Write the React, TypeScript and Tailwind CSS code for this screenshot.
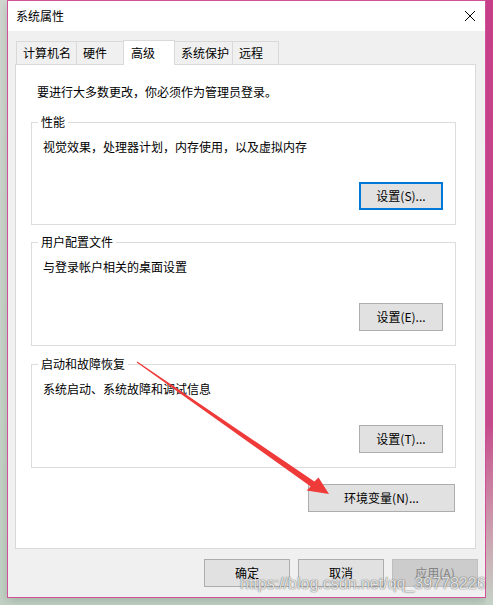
import React from 'react';

type BtnKind = 'normal' | 'focus' | 'disabled';

const kindClass: Record<BtnKind, string> = {
  normal: 'border border-[#adadad] bg-[#e1e1e1] text-black',
  focus: 'border-2 border-[#0078d7] bg-[#e1e1e1] text-black',
  disabled: 'border border-[#bfbfbf] bg-[#cccccc] text-[#838383]',
};

interface WinButtonProps {
  label: string;
  width: string;
  kind?: BtnKind;
}

const WinButton: React.FC<WinButtonProps> = ({ label, width, kind = 'normal' }) => (
  <div className={`flex h-[28px] items-center justify-center text-[12px] leading-none ${width} ${kindClass[kind]}`}>
    {label}
  </div>
);

interface GroupProps {
  title: string;
  desc: string;
  button: string;
  height: string;
  spacing: string;
  kind?: BtnKind;
}

const Group: React.FC<GroupProps> = ({ title, desc, button, height, spacing, kind }) => (
  <div className={`relative ml-[15px] flex w-[425px] flex-col border border-[#dcdcdc] ${height} ${spacing}`}>
    {/* legend sits on the top border */}
    <span className="absolute left-[6px] top-[-10px] bg-white px-[3px] text-[12px] leading-[18px]">{title}</span>
    <p className="pl-[11px] pt-[15px] text-[12px] leading-[18px]">{desc}</p>
    <div className="mb-[14px] mr-[12px] mt-auto self-end">
      <WinButton label={button} width="w-[84px]" kind={kind} />
    </div>
  </div>
);

const tabBase = 'flex items-center border-[#d9d9d9] pl-[6px] text-[12px] leading-none';

const App: React.FC = () => {
  return (
    <div className="relative flex h-[605px] w-[493px] overflow-hidden bg-[#c6d5c8] font-['Noto_Sans_CJK_SC',sans-serif] text-black">
      <div className="h-full w-[7px] bg-gradient-to-b from-[#d3d8d2] to-[#c3d2c5]" />

      {/* dialog window */}
      <div className="flex h-[598px] w-[479px] flex-col border border-[#d0509a] bg-[#f0f0f0] shadow-[0_4px_10px_rgba(60,80,60,0.25)]">
        <div className="flex h-[30px] items-center justify-between bg-white pl-[8px] pr-[10px]">
          <span className="text-[12px] leading-none">系统属性</span>
          <svg width="10" height="10" viewBox="0 0 10 10">
            <path d="M0 0 L10 10 M10 0 L0 10" stroke="#000" strokeWidth="1" />
          </svg>
        </div>

        <div className="flex flex-col pt-[9px]">
          {/* tabs */}
          <div className="flex h-[24px] items-end pl-[8px]">
            <div className={`${tabBase} h-[23px] w-[60px] border-l border-t`}>计算机名</div>
            <div className={`${tabBase} h-[23px] w-[47px] border-l border-t`}>硬件</div>
            <div className="relative z-10 -mb-px flex h-[25px] w-[52px] items-center border-x border-t border-[#d9d9d9] bg-white pb-[1px] pl-[7px] text-[12px] leading-none">
              高级
            </div>
            <div className={`${tabBase} h-[23px] w-[58px] border-r border-t pl-[4px]`}>系统保护</div>
            <div className={`${tabBase} h-[23px] w-[46px] border-r border-t`}>远程</div>
          </div>

          {/* tab page */}
          <div className="ml-[7px] flex h-[485px] w-[461px] flex-col border border-[#d9d9d9] bg-white">
            <p className="pl-[21px] pt-[18px] text-[12px] leading-[18px]">要进行大多数更改，你必须作为管理员登录。</p>

            <Group
              title="性能"
              desc="视觉效果，处理器计划，内存使用，以及虚拟内存"
              button="设置(S)..."
              height="h-[103px]"
              spacing="mt-[21px]"
              kind="focus"
            />
            <Group
              title="用户配置文件"
              desc="与登录帐户相关的桌面设置"
              button="设置(E)..."
              height="h-[104px]"
              spacing="mt-[17px]"
            />
            <Group
              title="启动和故障恢复"
              desc="系统启动、系统故障和调试信息"
              button="设置(T)..."
              height="h-[104px]"
              spacing="mt-[18px]"
            />

            <div className="mr-[20px] mt-[16px] self-end">
              <WinButton label="环境变量(N)..." width="w-[147px]" />
            </div>
          </div>

          {/* dialog buttons */}
          <div className="mt-[10px] flex justify-end gap-[8px] pr-[7px]">
            <WinButton label="确定" width="w-[86px]" />
            <WinButton label="取消" width="w-[86px]" />
            <WinButton label="应用(A)" width="w-[86px]" kind="disabled" />
          </div>
        </div>
      </div>

      <div className="h-full flex-1 bg-gradient-to-b from-[#c63f88] via-[#c44a8c] via-70% to-[#c4d3c6]" />

      {/* red annotation arrow */}
      <svg className="pointer-events-none absolute left-0 top-0" width="493" height="605" viewBox="0 0 493 605">
        <polygon
          points="137.3,361.6 314.4,481.5 318.5,477.6 329,494 306.6,490.4 310.7,486.5 136.7,362.4"
          fill="#ef3a3a"
        />
      </svg>

      {/* blog watermark */}
      <span className="pointer-events-none absolute left-[240px] top-[576px] font-['Liberation_Sans',Arial,sans-serif] text-[16px] leading-none text-[#f4f4f4]/90 [text-shadow:0_0_1px_rgba(0,0,0,0.6),0_0_2px_rgba(0,0,0,0.25)]">
        https://blog.csdn.net/qq_39778226
      </span>
    </div>
  );
};

export default App;
